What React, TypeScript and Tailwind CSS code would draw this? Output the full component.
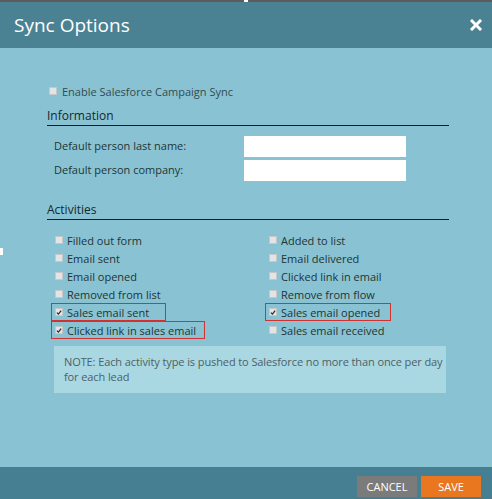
import React from "react"

type Activity = { label: string; checked?: boolean; boxW?: string }

const leftActivities: Activity[] = [
  { label: "Filled out form" },
  { label: "Email sent" },
  { label: "Email opened" },
  { label: "Removed from list" },
  { label: "Sales email sent", checked: true, boxW: "w-[115px] border border-[#d2312f]" },
  { label: "Clicked link in sales email", checked: true, boxW: "w-[154px] border border-[#d2312f]" },
]

const rightActivities: Activity[] = [
  { label: "Added to list" },
  { label: "Email delivered" },
  { label: "Clicked link in email" },
  { label: "Remove from flow" },
  { label: "Sales email opened", checked: true, boxW: "w-[126px] border border-[#d2312f]" },
  { label: "Sales email received" },
]

function Box({ checked }: { checked?: boolean }) {
  return (
    <span className="w-[8px] h-[8px] shrink-0 bg-[#e4e4e4] border border-[#c4c8c9] flex items-center justify-center">
      {checked && (
        <svg width="7" height="7" viewBox="0 0 7 7">
          <path d="M1 3.6 L2.8 5.4 L6 1.2" fill="none" stroke="#2b2b2b" strokeWidth="1.5" />
        </svg>
      )}
    </span>
  )
}

function ActivityItem({ item }: { item: Activity }) {
  return (
    <div className={`h-[18px] flex items-center gap-[4px] ${item.boxW ? `${item.boxW} pl-[3px]` : "pl-[4px]"}`}>
      <Box checked={item.checked} />
      <span className="text-[11px] text-[#1f3434] leading-none">{item.label}</span>
    </div>
  )
}

export default function App() {
  return (
    <div
      className="relative w-[492px] h-[499px] flex flex-col bg-[#89c3d3] overflow-hidden"
      style={{ fontFamily: '"Open Sans", "DejaVu Sans", sans-serif' }}
    >
      <div className="h-[2px] bg-[#5c5c5c] flex justify-center">
        <span className="w-[4px] h-[2px] bg-white" />
      </div>

      <div className="h-[46px] bg-[#4a8294] flex items-center justify-between pl-[14px] pr-[10px]">
        <span className="text-[19px] text-white leading-none">Sync Options</span>
        <svg width="12" height="12" viewBox="0 0 12 12">
          <path d="M2 2 L10 10 M10 2 L2 10" stroke="white" strokeWidth="3" strokeLinecap="square" />
        </svg>
      </div>

      <div className="flex-1 pl-[47px] pr-[43px] pt-[35px]">
        <div className="h-[16px] flex items-center gap-[5px] pl-[2px]">
          <Box />
          <span className="text-[11px] text-[#354a50] leading-none">Enable Salesforce Campaign Sync</span>
        </div>

        <div className="mt-[9px] h-[18px] border-b border-[#1a1a1a] text-[12px] text-[#17282a] leading-[16px]">
          Information
        </div>

        <div className="mt-[10px] flex items-center pl-[7px]">
          <span className="w-[190px] text-[11px] text-[#1f3434]">Default person last name:</span>
          <div className="w-[162px] h-[21px] bg-white" />
        </div>
        <div className="mt-[3px] flex items-center pl-[7px]">
          <span className="w-[190px] text-[11px] text-[#1f3434]">Default person company:</span>
          <div className="w-[162px] h-[21px] bg-white" />
        </div>

        <div className="mt-[21px] h-[18px] border-b border-[#1a1a1a] text-[12px] text-[#17282a] leading-[16px]">
          Activities
        </div>

        <div className="mt-[11px] ml-[4px] flex">
          <div className="w-[214px] flex flex-col">
            {leftActivities.map((a) => (
              <ActivityItem key={a.label} item={a} />
            ))}
          </div>
          <div className="flex flex-col">
            {rightActivities.map((a) => (
              <ActivityItem key={a.label} item={a} />
            ))}
          </div>
        </div>

        <div className="mt-[7px] ml-[7px] w-[392px] h-[47px] bg-[#aad8e2] pl-[10px] pt-[8px] text-[11px] leading-[15px] text-[#4d6166] whitespace-nowrap tracking-[-0.1px]">
          NOTE: Each activity type is pushed to Salesforce no more than once per day
          <br />
          for each lead
        </div>
      </div>

      <div className="h-[32px] bg-[#467f91] flex justify-end items-start pt-[9px] pr-[11px] gap-[4px]">
        <button className="w-[60px] h-[21px] bg-[#7b7b7b] text-white text-[11px] leading-none">CANCEL</button>
        <button className="w-[60px] h-[21px] bg-[#e8771f] text-white text-[11px] leading-none">SAVE</button>
      </div>

      <span className="absolute left-0 top-[248px] w-[3px] h-[7px] bg-white" />
    </div>
  )
}
